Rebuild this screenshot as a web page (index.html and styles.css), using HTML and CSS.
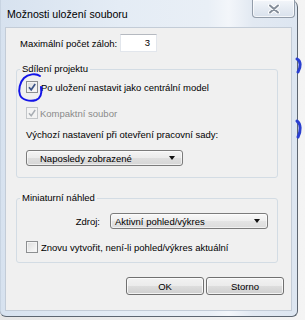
FILE: index.html
```html
<!DOCTYPE html>
<html lang="cs">
<head>
<meta charset="utf-8">
<title>Možnosti uložení souboru</title>
<link rel="stylesheet" href="styles.css">
</head>
<body>
<div class="desk">
  <div class="window">
    <div class="titlebar">
      <span class="title">Možnosti uložení souboru</span>
      <div class="close">
        <svg width="12" height="10" viewBox="0 0 12 10">
          <path d="M2 1.5 L10 8.5 M10 1.5 L2 8.5" stroke="#ffffff" stroke-width="4" stroke-linecap="round"/>
          <path d="M2 1.5 L10 8.5 M10 1.5 L2 8.5" stroke="#858e9a" stroke-width="2" stroke-linecap="round"/>
        </svg>
      </div>
    </div>
    <div class="client">
      <div class="row-max">
        <span class="max-lbl">Maximální počet záloh:</span>
        <div class="spin">3</div>
      </div>

      <fieldset class="group g1">
        <legend>Sdílení projektu</legend>
        <div class="check">
          <span class="box">
            <svg width="10" height="10" viewBox="0 0 10 10"><path d="M2 5.2 L4.2 7.8 L8.2 2" fill="none" stroke="#3c5487" stroke-width="1.7"/></svg>
          </span>
          <span class="ctext">Po uložení nastavit jako centrální model</span>
        </div>
        <div class="check disabled">
          <span class="box">
            <svg width="10" height="10" viewBox="0 0 10 10"><path d="M2 5.2 L4.2 7.8 L8.2 2" fill="none" stroke="#a9aeb4" stroke-width="1.5"/></svg>
          </span>
          <span class="ctext">Kompaktní soubor</span>
        </div>
        <div class="lbl">Výchozí nastavení při otevření pracovní sady:</div>
        <div class="combo c1"><span class="ctxt">Naposledy zobrazené</span><span class="arrow"></span></div>
      </fieldset>

      <fieldset class="group g2">
        <legend>Miniaturní náhled</legend>
        <div class="src-row">
          <span class="src-lbl">Zdroj:</span>
          <div class="combo c2"><span class="ctxt">Aktivní pohled/výkres</span><span class="arrow"></span></div>
        </div>
        <div class="check c3">
          <span class="box"></span>
          <span class="ctext">Znovu vytvořit, není-li pohled/výkres aktuální</span>
        </div>
      </fieldset>

      <div class="buttons">
        <div class="btn">OK</div>
        <div class="btn">Storno</div>
      </div>
    </div>
  </div>

  <svg class="annot" width="32" height="34" viewBox="0 0 32 34">
    <path d="M25 4 C21 1 13 2 9 6 C5 10 3 18 5 23 C7 28 15 30 21 28 C26 26 27 21 26 15" fill="none" stroke="#1414e8" stroke-width="2" stroke-linecap="round"/>
  </svg>
  <svg class="edge" width="11" height="90" viewBox="0 0 11 90">
    <path d="M3 4 C7 6 7 12 4 17" fill="none" stroke="#2a3fd0" stroke-width="3" stroke-linecap="round"/>
    <path d="M3 66 C7 69 7 76 4 82" fill="none" stroke="#2a3fd0" stroke-width="3" stroke-linecap="round"/>
  </svg>
</div>
</body>
</html>
```

FILE: styles.css
```css
html, body {
  margin: 0;
  padding: 0;
}

body {
  background: #ebebeb;
  font-family: "Liberation Sans", Arial, sans-serif;
  font-size: 9.5px;
  color: #000000;
}

.desk {
  position: relative;
  width: 305px;
  height: 320px;
  overflow: hidden;
  background: linear-gradient(to right, #e6e6e6, #f4f4f4);
}

.window {
  box-sizing: border-box;
  width: 298px;
  height: 317px;
  padding: 0 5px 5px 5px;
  display: flex;
  flex-direction: column;
  background: linear-gradient(to right, #d7e2ef 0%, #e4ecf5 40%, #e9eff6 70%, #f3f6fa 77%, #e2e9f2 85%, #dde6f1 100%);
  border-right: 1px solid #5d6671;
  border-bottom: 1px solid #5d6671;
  border-radius: 0 7px 6px 6px;
  box-shadow: inset 1px 0 0 #c8d4e2;
}

.titlebar {
  height: 27px;
  flex: none;
  display: flex;
  align-items: flex-start;
}

.title {
  margin: 8px 0 0 2px;
  font-size: 10.6px;
  line-height: 13px;
  color: #000000;
}

.close {
  margin-left: auto;
  margin-right: -3px;
  box-sizing: border-box;
  width: 43px;
  height: 18px;
  border: 1px solid #939daa;
  border-top: none;
  border-radius: 0 0 4px 4px;
  background: linear-gradient(#f3f6fa, #e4eaf2 55%, #d9e1ec);
  box-shadow: inset 0 0 0 1px rgba(255, 255, 255, 0.7);
  display: flex;
  align-items: center;
  justify-content: center;
}

.client {
  flex: 1;
  box-sizing: border-box;
  background: #f0f0f0;
  border: 1px solid #c3ccd7;
  display: flex;
  flex-direction: column;
}

.row-max {
  margin: 6px 0 0 14px;
  height: 18px;
  display: flex;
  align-items: center;
}

.max-lbl {
  width: 100px;
}

.spin {
  box-sizing: border-box;
  width: 37px;
  height: 18px;
  background: #ffffff;
  border: 1px solid #e2e6ec;
  border-top-color: #b5b9c0;
  padding-right: 6px;
  text-align: right;
  line-height: 16px;
}

.group {
  margin: 0 0 0 10px;
  width: 262px;
  box-sizing: border-box;
  border: 1px solid #d3dce4;
  border-radius: 3px;
  padding: 5px 9px 11px 9px;
  min-width: 0;
  display: flex;
  flex-direction: column;
  align-items: flex-start;
}

.group legend {
  padding: 0 2px;
  margin-left: -6px;
  line-height: 12px;
}

.g1 {
  margin-top: 11px;
}

.g2 {
  margin-top: 14px;
  padding-top: 9px;
  padding-bottom: 8px;
}

.check {
  display: flex;
  align-items: center;
  height: 14px;
}

.check + .check {
  margin-top: 12px;
}

.box {
  box-sizing: border-box;
  width: 12px;
  height: 12px;
  border: 1px solid #8d8f91;
  background: linear-gradient(135deg, #dcdcdc, #fbfbfb);
  box-shadow: inset 0 0 0 1px #f4f4f4;
  display: flex;
  align-items: center;
  justify-content: center;
}

.ctext {
  margin-left: 3px;
}

.disabled .box {
  border-color: #c3c6c9;
  background: #f3f3f3;
  box-shadow: none;
}

.disabled .ctext {
  margin-left: 2px;
  color: #8a8a8a;
}

.lbl {
  margin-top: 8px;
  line-height: 14px;
}

.combo {
  box-sizing: border-box;
  height: 16px;
  border: 1px solid #7b7b7b;
  border-radius: 3px;
  background: linear-gradient(#f4f4f4, #ebebeb 50%, #dedede 51%, #d6d6d6);
  box-shadow: inset 0 0 0 1px rgba(255, 255, 255, 0.6);
  display: flex;
  align-items: center;
}

.c1 {
  margin-top: 8px;
  width: 157px;
  padding-left: 13px;
}

.c2 {
  width: 158px;
  padding-left: 4px;
  background: linear-gradient(#f8f8f8, #eeeeee 50%, #e4e4e4 51%, #dcdcdc);
}

.ctxt {
  flex: 1;
}

.arrow {
  width: 0;
  height: 0;
  margin-right: 7px;
  border-left: 3.5px solid transparent;
  border-right: 3.5px solid transparent;
  border-top: 4px solid #111111;
}

.src-row {
  display: flex;
  align-items: center;
}

.src-lbl {
  width: 74px;
  margin-right: 10px;
  text-align: right;
}

.c3 {
  margin-top: 11px;
}

.buttons {
  margin: 14px 7px 0 0;
  display: flex;
  justify-content: flex-end;
  gap: 2px;
}

.btn {
  box-sizing: border-box;
  width: 78px;
  height: 18px;
  border: 1px solid #707070;
  border-radius: 3px;
  background: linear-gradient(#f2f2f2, #ebebeb 50%, #dddddd 51%, #cfcfcf);
  box-shadow: inset 0 0 0 1px rgba(255, 255, 255, 0.75);
  display: flex;
  align-items: center;
  justify-content: center;
}

.annot {
  position: absolute;
  left: 15px;
  top: 72px;
}

.edge {
  position: absolute;
  left: 294px;
  top: 55px;
}
```
